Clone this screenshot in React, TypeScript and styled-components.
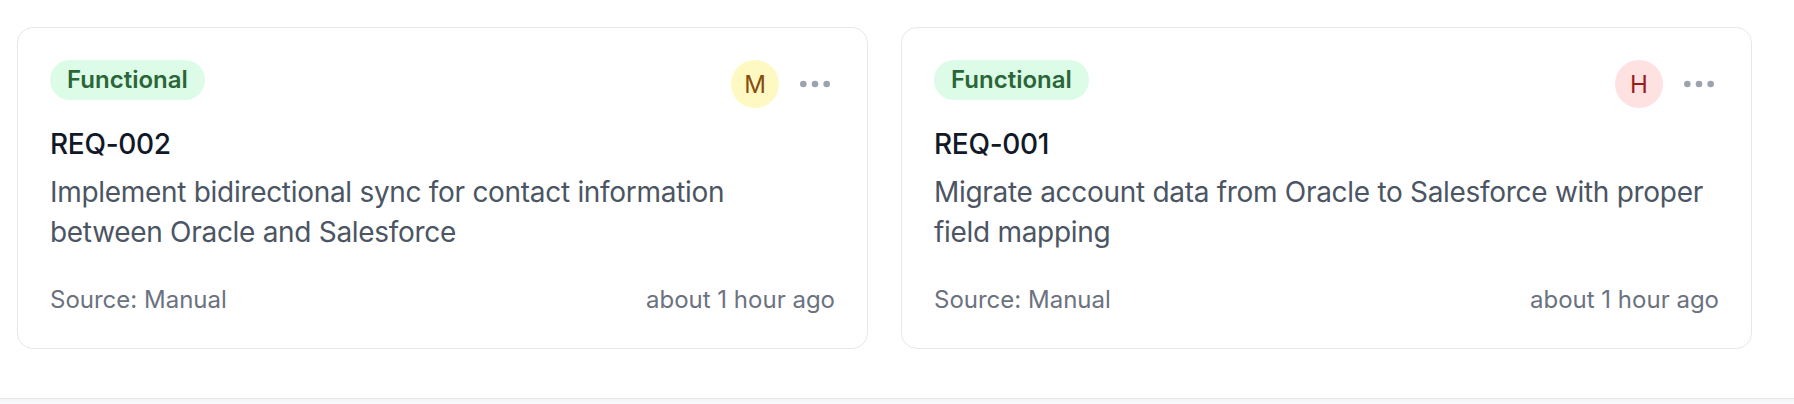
import React from "react";
import styled, { createGlobalStyle } from "styled-components";

const GlobalStyle = createGlobalStyle`
  html, body { margin: 0; padding: 0; background: #ffffff; }
  body { font-family: Inter, "Noto Sans", "Liberation Sans", sans-serif; -webkit-font-smoothing: antialiased; }
  * { box-sizing: border-box; }
`;

const Page = styled.div`
  width: 1794px;
  height: 404px;
  display: flex;
  flex-direction: column;
  background: #ffffff;
  overflow: hidden;
`;

const Grid = styled.div`
  flex: 1;
  display: grid;
  grid-template-columns: 1fr 1fr;
  gap: 33px;
  padding: 27px 42px 0 17px;
  align-content: start;
`;

const Card = styled.div`
  border: 1px solid #e5e7eb;
  border-radius: 16px;
  background: #ffffff;
  padding: 32px;
  display: flex;
  flex-direction: column;
`;

const Header = styled.div`
  display: flex;
  align-items: flex-start;
  justify-content: space-between;
  height: 48px;
  margin-bottom: 16px;
`;

const Badge = styled.span`
  display: inline-flex;
  align-items: center;
  height: 40px;
  padding: 0 17px;
  border-radius: 999px;
  background: #dcfce7;
  color: #2a6637;
  font-size: 24px;
  font-weight: 600;
  line-height: 32px;
`;

const Actions = styled.div`
  display: flex;
  align-items: center;
  gap: 16px;
`;

const Avatar = styled.div<{ $bg: string; $fg: string }>`
  width: 48px;
  height: 48px;
  border-radius: 50%;
  background: ${(p) => p.$bg};
  color: ${(p) => p.$fg};
  display: flex;
  align-items: center;
  justify-content: center;
  font-size: 24px;
  font-weight: 400;
`;

const MoreButton = styled.button`
  width: 40px;
  height: 40px;
  padding: 0;
  border: none;
  background: transparent;
  color: #9ca3af;
  display: flex;
  align-items: center;
  justify-content: center;
  cursor: pointer;
`;

const Title = styled.div`
  font-size: 28px;
  line-height: 40px;
  font-weight: 500;
  letter-spacing: -0.3px;
  color: #111827;
  margin-bottom: 8px;
`;

const Description = styled.p`
  margin: 0;
  font-size: 28px;
  line-height: 40px;
  letter-spacing: -0.3px;
  color: #4b5563;
  min-height: 80px;
`;

const Footer = styled.div`
  margin-top: 32px;
  display: flex;
  justify-content: space-between;
  font-size: 24px;
  line-height: 32px;
  color: #6b7280;
`;

const BottomBar = styled.div`
  height: 6px;
  border-top: 1px solid #e5e7eb;
  background: linear-gradient(#f3f4f6, #f9fafb);
`;

const Ellipsis = () => (
  <svg width="40" height="40" viewBox="0 0 24 24" fill="none" stroke="currentColor" strokeWidth="2" strokeLinecap="round" strokeLinejoin="round">
    <circle cx="12" cy="12" r="1" />
    <circle cx="19" cy="12" r="1" />
    <circle cx="5" cy="12" r="1" />
  </svg>
);

type Req = {
  id: string;
  type: string;
  priority: string;
  bg: string;
  fg: string;
  description: string;
  source: string;
  time: string;
};

const reqs: Req[] = [
  {
    id: "REQ-002",
    type: "Functional",
    priority: "M",
    bg: "#fef9c3",
    fg: "#854d0e",
    description: "Implement bidirectional sync for contact information between Oracle and Salesforce",
    source: "Manual",
    time: "about 1 hour ago",
  },
  {
    id: "REQ-001",
    type: "Functional",
    priority: "H",
    bg: "#fee2e2",
    fg: "#991b1b",
    description: "Migrate account data from Oracle to Salesforce with proper field mapping",
    source: "Manual",
    time: "about 1 hour ago",
  },
];

export default function App() {
  return (
    <>
      <GlobalStyle />
      <Page>
        <Grid>
          {reqs.map((r) => (
            <Card key={r.id}>
              <Header>
                <Badge>{r.type}</Badge>
                <Actions>
                  <Avatar $bg={r.bg} $fg={r.fg}>{r.priority}</Avatar>
                  <MoreButton aria-label="More">
                    <Ellipsis />
                  </MoreButton>
                </Actions>
              </Header>
              <Title>{r.id}</Title>
              <Description>{r.description}</Description>
              <Footer>
                <span>Source: {r.source}</span>
                <span>{r.time}</span>
              </Footer>
            </Card>
          ))}
        </Grid>
        <BottomBar />
      </Page>
    </>
  );
}
